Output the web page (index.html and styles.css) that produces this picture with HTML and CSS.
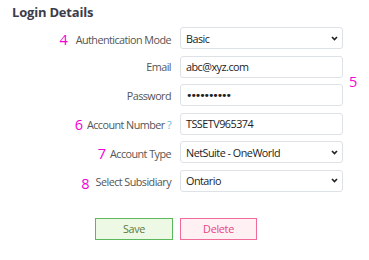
FILE: index.html
```html
<!DOCTYPE html>
<html>
<head>
<meta charset="utf-8">
<link rel="stylesheet" href="styles.css">
</head>
<body>
<div class="page">
  <h2 class="title">Login Details</h2>
  <div class="form">
    <label class="lbl"><span class="num num-4">4</span>Authentication Mode</label>
    <div class="field select"><span>Basic</span><svg class="chev" viewBox="0 0 8 6" width="7" height="5"><path d="M1 1.2l3 3 3-3" fill="none" stroke="#222" stroke-width="2"/></svg></div>
    <div class="note-empty"></div>

    <label class="lbl">Email</label>
    <div class="field"><span>abc@xyz.com</span></div>
    <div class="note note-5"><span class="num">5</span></div>

    <label class="lbl">Password</label>
    <div class="field"><span class="dots">••••••••••</span></div>

    <label class="lbl"><span class="num">6</span>Account Number <span class="help">?</span></label>
    <div class="field"><span>TSSETV965374</span></div>
    <div class="note-empty"></div>

    <label class="lbl"><span class="num">7</span>Account Type</label>
    <div class="field select"><span>NetSuite - OneWorld</span><svg class="chev" viewBox="0 0 8 6" width="7" height="5"><path d="M1 1.2l3 3 3-3" fill="none" stroke="#222" stroke-width="2"/></svg></div>
    <div class="note-empty"></div>

    <label class="lbl"><span class="num num-8">8</span>Select Subsidiary</label>
    <div class="field select"><span>Ontario</span><svg class="chev" viewBox="0 0 8 6" width="7" height="5"><path d="M1 1.2l3 3 3-3" fill="none" stroke="#222" stroke-width="2"/></svg></div>
    <div class="note-empty"></div>
  </div>
  <div class="actions">
    <button class="btn btn-save">Save</button>
    <button class="btn btn-delete">Delete</button>
  </div>
</div>
</body>
</html>
```
FILE: styles.css
```css
html, body {
  margin: 0;
  padding: 0;
  background: #ffffff;
}
body {
  font-family: "Open Sans", "Noto Sans", Arial, sans-serif;
  color: #333;
}
.page {
  padding: 3px 0 0 12px;
}
.title {
  margin: 0;
  font-size: 13px;
  font-weight: 700;
  color: #3b3d4a;
  line-height: 18px;
  letter-spacing: -0.2px;
}
.form {
  margin-top: 6px;
  margin-left: -12px;
  display: grid;
  grid-template-columns: 171px 163px auto;
  grid-auto-rows: 22px;
  column-gap: 9px;
  row-gap: 6.6px;
  align-items: center;
}
.lbl {
  text-align: right;
  font-size: 10.8px;
  color: #555;
  white-space: nowrap;
  letter-spacing: -0.55px;
}
.num {
  color: #f200d6;
  font-size: 14.5px;
  margin-right: 4px;
  position: relative;
  top: 1px;
  letter-spacing: 0;
}
.num-4 { margin-right: 8px; }
.num-8 { margin-right: 6px; top: 3px; }
.help {
  color: #5bc0de;
}
.field {
  height: 22px;
  box-sizing: border-box;
  border: 1px solid #dde2e6;
  border-radius: 3px;
  display: flex;
  align-items: center;
  padding: 0 4px 0 5px;
  font-size: 10.8px;
  letter-spacing: -0.5px;
  color: #222;
  background: #fff;
}
.select {
  justify-content: space-between;
}
.chev {
  display: block;
}
.dots {
  letter-spacing: -2.1px;
  font-size: 11px;
  font-family: "DejaVu Sans", sans-serif;
}
.note {
  grid-column: 3;
  grid-row: 2 / span 2;
  align-self: center;
  margin-left: -3px;
}
.note .num {
  margin: 0;
  top: 0;
}
.actions {
  display: flex;
  gap: 7px;
  margin-top: 26px;
  padding-left: 83px;
}
.btn {
  width: 78px;
  height: 22px;
  font-family: "Open Sans", "Noto Sans", Arial, sans-serif;
  font-size: 10.8px;
  letter-spacing: -0.3px;
  border-radius: 0;
  padding: 0;
  cursor: pointer;
}
.btn-save {
  background: #edf9e5;
  border: 1px solid #5cb85c;
  color: #5c7a3c;
}
.btn-delete {
  background: #fff0f4;
  border: 1px solid #f06a9a;
  color: #e6457f;
  width: 77px;
}
```
